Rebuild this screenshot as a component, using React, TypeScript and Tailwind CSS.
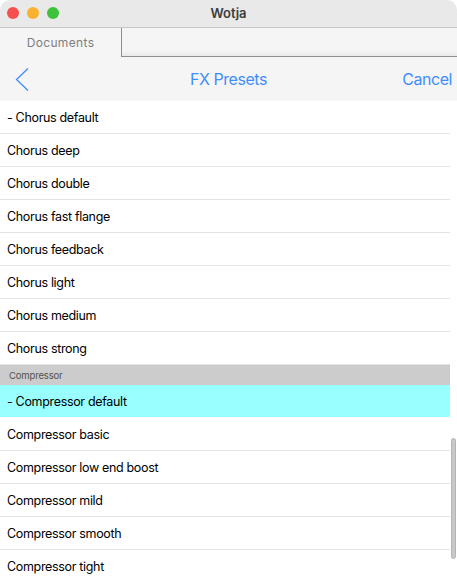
const chorus = [
  "- Chorus default",
  "Chorus deep",
  "Chorus double",
  "Chorus fast flange",
  "Chorus feedback",
  "Chorus light",
  "Chorus medium",
  "Chorus strong",
];

const compressor = [
  "- Compressor default",
  "Compressor basic",
  "Compressor low end boost",
  "Compressor mild",
  "Compressor smooth",
  "Compressor tight",
];

function Row({ label, selected }: { label: string; selected?: boolean }) {
  return (
    <div
      className={`h-[33px] shrink-0 flex items-center pl-[7px] pt-[3px] text-[12.5px] tracking-[-0.33px] text-black border-b ${
        selected ? "bg-[#99ffff] border-white" : "border-[#e4e4e4]"
      }`}
    >
      {label}
    </div>
  );
}

export default function App() {
  return (
    <div className="relative w-[457px] h-[578px] overflow-hidden bg-white font-['Inter','Liberation_Sans',sans-serif]">
      {/* Title bar */}
      <div className="h-[28px] flex items-center justify-center relative bg-[#e9e9e9] border-b border-[#c8c8c8] rounded-t-[10px]">
        <div className="absolute left-[7px] top-[7px] flex gap-[8px]">
          <span className="w-[12px] h-[12px] rounded-full bg-[#f5504e]" />
          <span className="w-[12px] h-[12px] rounded-full bg-[#fbb130]" />
          <span className="w-[12px] h-[12px] rounded-full bg-[#3cc33b]" />
        </div>
        <span className="text-[13px] font-semibold text-[#3c3c3c]">Wotja</span>
      </div>

      {/* Tabs */}
      <div className="h-[29px] flex bg-[#f5f5f5]">
        <div className="w-[122px] flex items-center justify-center border-r border-[#8e8e8e] text-[12px] tracking-[0.35px] text-[#7f7f7f]">
          Documents
        </div>
        <div className="flex-1 border-b border-[#8e8e8e] bg-gradient-to-b from-[#f5f5f5] from-80% to-[#e9e9e9]" />
      </div>

      {/* Nav bar */}
      <div className="h-[44px] flex items-center justify-between bg-[#f5f5f5] pl-[15px] pr-[5px] relative">
        <svg width="14" height="24" viewBox="0 0 14 24" fill="none" className="mt-[-1px]">
          <path d="M13 1.5 1.5 12.5 13 23.5" stroke="#3f8efc" strokeWidth="1.3" />
        </svg>
        <span className="absolute left-0 right-0 text-center text-[16px] tracking-[-0.45px] text-[#3f8efc] pointer-events-none">
          FX Presets
        </span>
        <span className="text-[16px] tracking-[-0.45px] text-[#3f8efc]">Cancel</span>
      </div>

      {/* List */}
      <div className="w-[450px] flex flex-col">
        {chorus.map((label) => (
          <Row key={label} label={label} />
        ))}
        <div className="h-[20px] shrink-0 flex items-center pl-[9px] pt-[3px] text-[9.5px] tracking-[-0.15px] text-[#505050] bg-[#cccccc]">
          Compressor
        </div>
        {compressor.map((label, i) => (
          <Row key={label} label={label} selected={i === 0} />
        ))}
      </div>

      {/* Scrollbar */}
      <div className="absolute left-[451px] top-[438px] w-[5px] h-[121px] rounded-full bg-[#c8c8c8] border border-[#b5b5b5]" />
    </div>
  );
}
